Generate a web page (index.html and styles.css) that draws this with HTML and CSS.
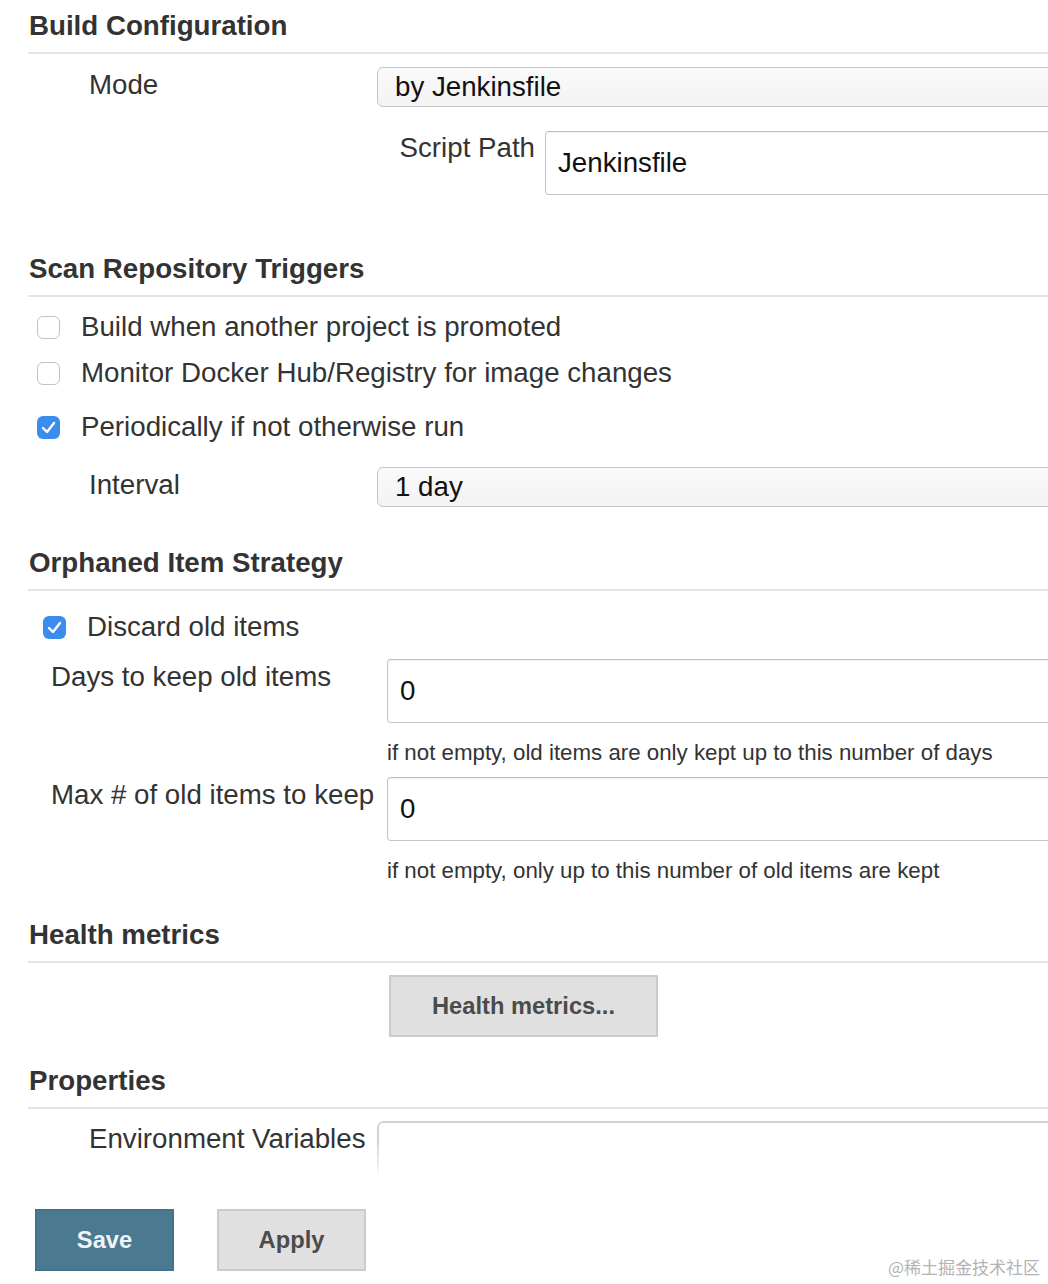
FILE: index.html
```html
<!DOCTYPE html>
<html lang="en">
<head>
<meta charset="utf-8">
<title>Build Configuration</title>
<link rel="stylesheet" href="styles.css">
</head>
<body>
<div class="page">
  <h2 class="heading h-first">Build Configuration</h2>
  <div class="row row-mode">
    <div class="label">Mode</div>
    <div class="select">by Jenkinsfile</div>
  </div>
  <div class="row row-script">
    <div class="label-right">Script Path</div>
    <div class="input">Jenkinsfile</div>
  </div>

  <h2 class="heading h-scan">Scan Repository Triggers</h2>
  <div class="check-row cr-1">
    <span class="cb"></span><span class="cb-text">Build when another project is promoted</span>
  </div>
  <div class="check-row cr-2">
    <span class="cb"></span><span class="cb-text">Monitor Docker Hub/Registry for image changes</span>
  </div>
  <div class="check-row cr-3">
    <span class="cb checked"><svg viewBox="0 0 23 23" width="23" height="23"><path d="M6 12 L10 16 L17 7" fill="none" stroke="#fff" stroke-width="2.4" stroke-linecap="round" stroke-linejoin="round"/></svg></span><span class="cb-text">Periodically if not otherwise run</span>
  </div>
  <div class="row row-interval">
    <div class="label">Interval</div>
    <div class="select">1 day</div>
  </div>

  <h2 class="heading h-orphan">Orphaned Item Strategy</h2>
  <div class="check-row cr-discard">
    <span class="cb checked"><svg viewBox="0 0 23 23" width="23" height="23"><path d="M6 12 L10 16 L17 7" fill="none" stroke="#fff" stroke-width="2.4" stroke-linecap="round" stroke-linejoin="round"/></svg></span><span class="cb-text">Discard old items</span>
  </div>
  <div class="row row-days">
    <div class="label-sub">Days to keep old items</div>
    <div class="input input-sub">0</div>
  </div>
  <div class="help help-1">if not empty, old items are only kept up to this number of days</div>
  <div class="row row-max">
    <div class="label-sub">Max # of old items to keep</div>
    <div class="input input-sub">0</div>
  </div>
  <div class="help help-2">if not empty, only up to this number of old items are kept</div>

  <h2 class="heading h-health">Health metrics</h2>
  <div class="btn btn-health">Health metrics...</div>

  <h2 class="heading h-props">Properties</h2>
  <div class="row row-env">
    <div class="label">Environment Variables</div>
    <div class="textarea"></div>
  </div>

  <div class="actions">
    <div class="btn btn-save">Save</div>
    <div class="btn btn-apply">Apply</div>
    <div class="watermark">@稀土掘金技术社区</div>
  </div>
</div>
</body>
</html>
```
FILE: styles.css
```css
html, body {
  margin: 0;
  padding: 0;
  background: #fff;
}
body {
  width: 1048px;
  height: 1284px;
  overflow: hidden;
  font-family: "Liberation Sans", Arial, sans-serif;
  color: #333;
}
.page {
  padding: 10px 0 0 28px;
}
.heading {
  margin: 0;
  font-size: 27.7px;
  font-weight: bold;
  line-height: 32px;
  padding: 0 0 10px 1px;
  border-bottom: 2px solid #e4e4e4;
  color: #333;
}
.h-scan { margin-top: 58px; }
.h-orphan { margin-top: 40px; }
.h-health { margin-top: 34px; }
.h-props { margin-top: 28px; }

.row {
  display: flex;
  align-items: flex-start;
}
.label {
  box-sizing: border-box;
  width: 349px;
  flex: none;
  padding-left: 61px;
  margin-top: 2px;
  font-size: 27.7px;
  line-height: 32px;
  white-space: nowrap;
}
.label-right {
  box-sizing: border-box;
  width: 168px;
  flex: none;
  padding-right: 10px;
  text-align: right;
  margin-top: 1px;
  font-size: 27.7px;
  line-height: 32px;
  white-space: nowrap;
}
.label-sub {
  box-sizing: border-box;
  width: 359px;
  flex: none;
  padding-left: 23px;
  margin-top: 2px;
  font-size: 27.7px;
  line-height: 32px;
  white-space: nowrap;
}
.select {
  flex: 1;
  box-sizing: border-box;
  height: 40px;
  margin-right: -30px;
  border: 1px solid #c6c6c6;
  border-radius: 6px;
  background: linear-gradient(#fafafa, #f3f3f3);
  padding-left: 17px;
  font-size: 27.7px;
  line-height: 38px;
  color: #111;
}
.input {
  flex: 1;
  box-sizing: border-box;
  height: 64px;
  margin-right: -30px;
  border: 1px solid #c6c6c6;
  border-top-color: #bdbdbd;
  border-radius: 4px;
  background: #fff;
  padding-left: 12px;
  font-size: 27.7px;
  line-height: 62px;
  color: #111;
  box-shadow: inset 0 1px 2px rgba(0,0,0,0.05);
}
.row-mode { margin-top: 13px; }
.row-script { margin-top: 24px; padding-left: 349px; }
.row-interval { margin-top: 24px; }
.row-days { margin-top: 16px; }
.row-max { margin-top: 10px; }
.row-env { margin-top: 12px; }

.check-row {
  display: flex;
  align-items: center;
  font-size: 27.7px;
  line-height: 32px;
}
.cb {
  box-sizing: border-box;
  width: 23px;
  height: 23px;
  flex: none;
  margin-left: 9px;
  margin-right: 21px;
  border: 1px solid #c2c2c2;
  border-radius: 6px;
  background: #fff;
  display: block;
}
.cb svg { display: block; }
.cb.checked {
  border: none;
  background: #3a8cee;
}
.cb-text { white-space: nowrap; }
.cr-1 { margin-top: 14px; }
.cr-2 { margin-top: 14px; }
.cr-3 { margin-top: 22px; }
.cr-discard { margin-top: 20px; }
.cr-discard .cb { margin-left: 15px; }

.help {
  padding-left: 359px;
  font-size: 22.3px;
  line-height: 28px;
  color: #333;
  white-space: nowrap;
}
.help-1 { margin-top: 16px; }
.help-2 { margin-top: 16px; }

.btn {
  box-sizing: border-box;
  height: 62px;
  border: 2px solid #cbcbcb;
  background: #e0e0e0;
  font-size: 23.7px;
  font-weight: bold;
  color: #4b4b4b;
  display: flex;
  align-items: center;
  justify-content: center;
}
.btn-health {
  width: 269px;
  margin-top: 12px;
  margin-left: 361px;
}
.textarea {
  flex: 1;
  box-sizing: border-box;
  height: 56px;
  margin-right: -30px;
  border-top: 2px solid #d2d2d2;
  border-left: 2px solid #d2d2d2;
  border-top-left-radius: 6px;
  -webkit-mask-image: linear-gradient(to bottom, #000 35%, transparent 100%);
  mask-image: linear-gradient(to bottom, #000 35%, transparent 100%);
}
.actions {
  display: flex;
  align-items: flex-start;
  margin-top: 32px;
}
.btn-save {
  width: 139px;
  margin-left: 7px;
  background: #4b7a90;
  border-color: #43708a;
  color: #eef4f7;
}
.btn-apply {
  width: 149px;
  margin-left: 43px;
}
.watermark {
  margin-left: auto;
  margin-right: 8px;
  margin-top: 46px;
  font-family: "Noto Sans CJK SC", sans-serif;
  font-size: 17px;
  line-height: 24px;
  color: #b3b3b3;
  white-space: nowrap;
}
```
